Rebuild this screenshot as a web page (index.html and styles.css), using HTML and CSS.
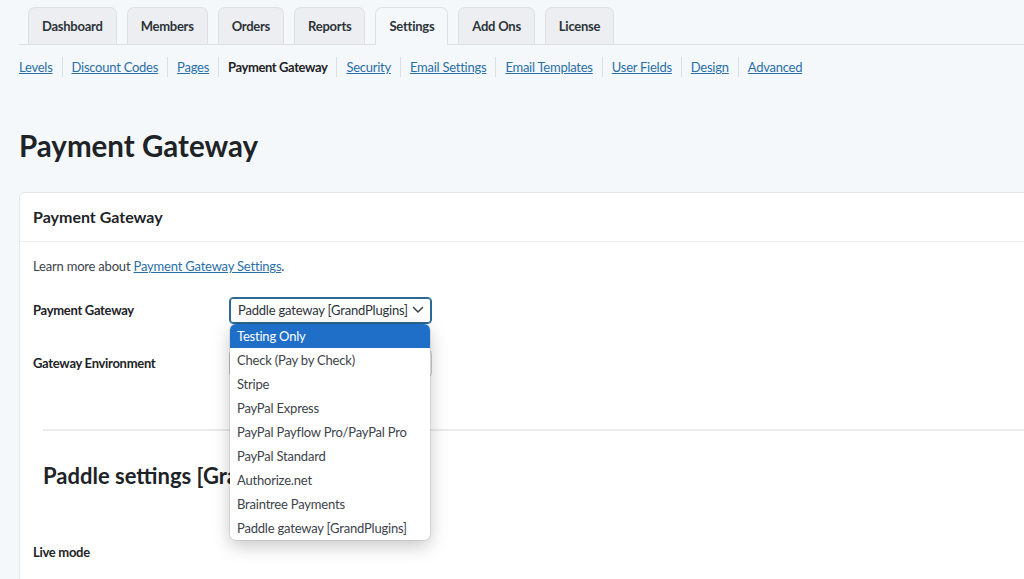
FILE: index.html
```html
<!DOCTYPE html>
<html lang="en">
<head>
<meta charset="utf-8">
<title>Payment Gateway</title>
<link rel="stylesheet" href="styles.css">
</head>
<body>
<div class="wrap">
  <nav class="tabs">
    <a class="tab">Dashboard</a>
    <a class="tab">Members</a>
    <a class="tab">Orders</a>
    <a class="tab">Reports</a>
    <a class="tab active">Settings</a>
    <a class="tab">Add Ons</a>
    <a class="tab">License</a>
  </nav>
  <ul class="subnav">
    <li><a href="#">Levels</a></li>
    <li><a href="#">Discount Codes</a></li>
    <li><a href="#">Pages</a></li>
    <li class="current">Payment Gateway</li>
    <li><a href="#">Security</a></li>
    <li><a href="#">Email Settings</a></li>
    <li><a href="#">Email Templates</a></li>
    <li><a href="#">User Fields</a></li>
    <li><a href="#">Design</a></li>
    <li><a href="#">Advanced</a></li>
  </ul>
  <h1 class="title">Payment Gateway</h1>
  <section class="card">
    <h2 class="card-head">Payment Gateway</h2>
    <div class="card-body">
      <p class="learn">Learn more about <a href="#">Payment Gateway Settings</a>.</p>
      <div class="row">
        <div class="label">Payment Gateway</div>
        <div class="field">
          <div class="select focused">
            <span>Paddle gateway [GrandPlugins]</span>
            <svg class="chev" width="12" height="8" viewBox="0 0 12 8"><path d="M1.5 1.5 L6 6 L10.5 1.5" fill="none" stroke="#3c434a" stroke-width="1.5" stroke-linecap="round" stroke-linejoin="round"/></svg>
          </div>
          <ul class="dropdown">
            <li class="hl">Testing Only</li>
            <li>Check (Pay by Check)</li>
            <li>Stripe</li>
            <li>PayPal Express</li>
            <li>PayPal Payflow Pro/PayPal Pro</li>
            <li>PayPal Standard</li>
            <li>Authorize.net</li>
            <li>Braintree Payments</li>
            <li>Paddle gateway [GrandPlugins]</li>
          </ul>
        </div>
      </div>
      <div class="row row2">
        <div class="label">Gateway Environment</div>
        <div class="field">
          <div class="select plain">
            <span>Sandbox/Testing</span>
          </div>
        </div>
      </div>
      <div class="sub">
        <hr class="rule">
        <h2 class="sub-title">Paddle settings [GrandPlugins]</h2>
      </div>
      <div class="row row3">
        <div class="label">Live mode</div>
      </div>
    </div>
  </section>
</div>
</body>
</html>
```

FILE: styles.css
```css
html, body {
  margin: 0;
  padding: 0;
  height: 100%;
  overflow: hidden;
}
body {
  background: #f5f8fa;
  font-family: "Lato", "Noto Sans", sans-serif;
  color: #1d2327;
  font-size: 13px;
  letter-spacing: -0.2px;
}
.wrap {
  padding-left: 19px;
}
.tabs {
  display: flex;
  gap: 10px;
  padding: 7px 0 0 9px;
  border-bottom: 1px solid #dde1e6;
  height: 37px;
}
.tab {
  display: block;
  height: 36px;
  line-height: 36px;
  padding: 0 13px;
  background: #eceef2;
  border: 1px solid #dde1e6;
  border-bottom: none;
  border-radius: 7px 7px 0 0;
  font-size: 13px;
  font-weight: 700;
  letter-spacing: -0.25px;
  color: #2c3338;
}
.tab.active {
  background: #f5f8fa;
  height: 37px;
  margin-bottom: -1px;
}
.subnav {
  display: flex;
  list-style: none;
  margin: 12px 0 0;
  padding: 0;
  font-size: 13px;
  line-height: 20px;
  letter-spacing: -0.25px;
}
.subnav li {
  padding: 0 9px;
  border-left: 1px solid #dcdfe3;
}
.subnav li:first-child {
  padding-left: 0;
  border-left: none;
}
.subnav a {
  color: #2a6fa8;
  text-decoration: underline;
}
.subnav .current {
  color: #1d2327;
  font-weight: 700;
  letter-spacing: -0.4px;
}
.title {
  margin: 51px 0 0;
  font-size: 29.5px;
  line-height: 36px;
  font-weight: 700;
  letter-spacing: 0;
  color: #1d2327;
}
.card {
  margin-top: 28px;
  margin-right: -30px;
  background: #fff;
  border: 1px solid #e4e6e9;
  border-radius: 6px;
  height: 420px;
}
.card-head {
  margin: 0;
  padding: 0 13px;
  height: 48px;
  line-height: 48px;
  font-size: 16px;
  font-weight: 700;
  letter-spacing: 0;
  border-bottom: 1px solid #eceef0;
  color: #1d2327;
}
.card-body {
  padding: 0 0 0 13px;
}
.learn {
  margin: 14px 0 0;
  line-height: 20px;
  color: #3c434a;
}
.learn a {
  color: #2a6fa8;
}
.row {
  display: flex;
  align-items: center;
  margin-top: 21px;
  height: 26px;
}
.label {
  width: 196px;
  font-weight: 700;
  letter-spacing: -0.3px;
  color: #1d2327;
}
.field {
  position: relative;
}
.select {
  box-sizing: border-box;
  width: 203px;
  height: 27px;
  border: 1px solid #8c8f94;
  border-radius: 4px;
  display: flex;
  align-items: center;
  justify-content: space-between;
  padding: 0 7px 0 8px;
  background: #fff;
  color: #2c3338;
  white-space: nowrap;
}
.select.focused {
  border-color: #2c6a94;
  box-shadow: 0 0 0 1px #2c6a94 inset;
}
.select.plain {
  border-color: #c9ccd0;
}
.chev {
  display: block;
  flex: none;
}
.dropdown {
  position: absolute;
  left: 1px;
  top: 27px;
  width: 200px;
  margin: 0;
  padding: 0;
  list-style: none;
  background: #fff;
  border-radius: 6px;
  box-shadow: 0 6px 18px rgba(0, 0, 0, 0.22), 0 0 0 1px rgba(0, 0, 0, 0.08);
  overflow: hidden;
  z-index: 5;
}
.dropdown li {
  height: 24px;
  line-height: 24px;
  padding-left: 7px;
  color: #3c434a;
  white-space: nowrap;
}
.dropdown li.hl {
  background: #1f6fc9;
  color: #fff;
}
.row2 {
  margin-top: 27px;
}
.sub {
  padding: 0 0 0 10px;
}
.rule {
  margin: 53px 0 0;
  border: none;
  border-top: 2px solid #e9ebed;
}
.sub-title {
  margin: 30px 0 0;
  font-size: 22px;
  line-height: 30px;
  font-weight: 700;
  letter-spacing: 0;
  color: #1d2327;
}
.row3 {
  margin-top: 48px;
}
```
